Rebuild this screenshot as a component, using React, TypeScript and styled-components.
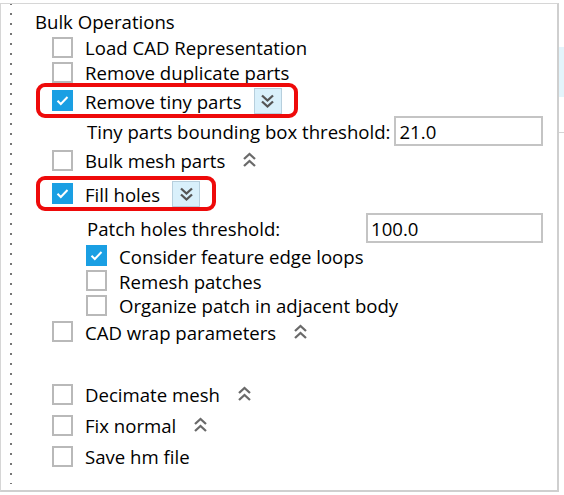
import React from "react";
import styled, { createGlobalStyle } from "styled-components";

const GlobalStyle = createGlobalStyle`
  html, body {
    margin: 0;
    padding: 0;
    background: #ffffff;
  }
  body {
    font-family: "Open Sans", "Noto Sans", "Liberation Sans", sans-serif;
    color: #000;
  }
`;

const Page = styled.div`
  display: flex;
  width: 564px;
  height: 495px;
  padding-top: 3px;
  box-sizing: border-box;
  overflow: hidden;
`;

const Panel = styled.div`
  display: flex;
  width: 559px;
  height: 489px;
  flex: none;
  box-sizing: border-box;
  border: 1px solid #d6d6d6;
  border-right: 2px solid #cfcfcf;
  border-bottom: 2px solid #cfcfcf;
`;

const Gutter = styled.div`
  width: 22px;
  flex: none;
  background-image: linear-gradient(#777777 2px, transparent 2px);
  background-size: 2px 10px;
  background-repeat: repeat-y;
  background-position: 9px 9px;
  margin-bottom: 6px;
`;

const Content = styled.div`
  flex: 1;
  display: flex;
  flex-direction: column;
  padding: 6px 14px 0 12px;
  font-size: 18.6px;
`;

const SideStrip = styled.div`
  flex: 1;
  display: flex;
  flex-direction: column;
`;

const SideCell = styled.div<{ $h: number; $bg?: string; $line?: boolean }>`
  height: ${(p) => p.$h}px;
  background: ${(p) => p.$bg || "transparent"};
  border-bottom: ${(p) => (p.$line ? "1px solid #d4d4d4" : "none")};
`;

const Title = styled.div`
  height: 25px;
  display: flex;
  align-items: center;
  line-height: 1;
`;

const Row = styled.div<{ $h: number; $indent: number }>`
  display: flex;
  align-items: center;
  height: ${(p) => p.$h}px;
  padding-left: ${(p) => p.$indent}px;
  white-space: nowrap;
`;

const Box = styled.span<{ $checked?: boolean }>`
  width: 21px;
  height: 21px;
  flex: none;
  box-sizing: border-box;
  display: flex;
  align-items: center;
  justify-content: center;
  border: 2px solid ${(p) => (p.$checked ? "#1a9fe3" : "#b9b9b9")};
  background: ${(p) => (p.$checked ? "#1a9fe3" : "#ffffff")};
  margin-right: 12px;
`;

const Label = styled.span`
  line-height: 1;
  padding-top: 3px;
`;

const Highlight = styled.div`
  display: inline-flex;
  align-items: center;
  height: 35px;
  box-sizing: border-box;
  border: 4px solid #ee0a0a;
  border-radius: 9px;
  margin-left: -16px;
  padding: 0 12px 0 12px;
`;

const ExpandButton = styled.span`
  width: 28px;
  height: 26px;
  box-sizing: border-box;
  display: flex;
  align-items: center;
  justify-content: center;
  margin-left: 12px;
  background: #d9f0fb;
  border: 1px solid #b7cfdd;
`;

const Collapse = styled.span`
  display: flex;
  align-items: center;
  margin-left: 17px;
`;

const FieldLabel = styled.span<{ $w?: number }>`
  line-height: 1;
  padding-top: 3px;
  width: ${(p) => (p.$w ? `${p.$w}px` : "auto")};
  flex: none;
  margin-right: 4px;
`;

const Input = styled.div`
  flex: 1;
  height: 30px;
  box-sizing: border-box;
  border: 2px solid #c4c4c4;
  display: flex;
  align-items: center;
  padding: 3px 0 0 3px;
  line-height: 1;
`;

const Spacer = styled.div`
  height: 33px;
`;

const Check = () => (
  <svg width="13" height="11" viewBox="0 0 13 11">
    <path d="M1.5 5.8 L4.8 9 L11.5 2" fill="none" stroke="#ffffff" strokeWidth="2" />
  </svg>
);

const ChevronsDown = () => (
  <svg width="15" height="16" viewBox="0 0 15 16">
    <path d="M2 2.5 L7.5 7.5 L13 2.5 M2 8.5 L7.5 13.5 L13 8.5" fill="none" stroke="#555555" strokeWidth="2.3" />
  </svg>
);

const ChevronsUp = () => (
  <svg width="15" height="16" viewBox="0 0 15 16">
    <path d="M2 7 L7.5 2 L13 7 M2 14 L7.5 9 L13 14" fill="none" stroke="#6a6a6a" strokeWidth="2.3" />
  </svg>
);

const Checkbox = ({ checked }: { checked?: boolean }) => (
  <Box $checked={checked}>{checked && <Check />}</Box>
);

export default function App() {
  return (
    <>
      <GlobalStyle />
      <Page>
        <Panel>
          <Gutter />
          <Content>
            <Title>Bulk Operations</Title>
            <Row $h={24} $indent={17}>
              <Checkbox />
              <Label>Load CAD Representation</Label>
            </Row>
            <Row $h={26} $indent={17}>
              <Checkbox />
              <Label>Remove duplicate parts</Label>
            </Row>
            <Row $h={31} $indent={17}>
              <Highlight>
                <Checkbox checked />
                <Label>Remove tiny parts</Label>
                <ExpandButton>
                  <ChevronsDown />
                </ExpandButton>
              </Highlight>
            </Row>
            <Row $h={30} $indent={52}>
              <FieldLabel>Tiny parts bounding box threshold:</FieldLabel>
              <Input>21.0</Input>
            </Row>
            <Row $h={28} $indent={17}>
              <Checkbox />
              <Label>Bulk mesh parts</Label>
              <Collapse>
                <ChevronsUp />
              </Collapse>
            </Row>
            <Row $h={39} $indent={17}>
              <Highlight>
                <Checkbox checked />
                <Label>Fill holes</Label>
                <ExpandButton>
                  <ChevronsDown />
                </ExpandButton>
              </Highlight>
            </Row>
            <Row $h={30} $indent={52}>
              <FieldLabel $w={275}>Patch holes threshold:</FieldLabel>
              <Input>100.0</Input>
            </Row>
            <Row $h={25} $indent={51}>
              <Checkbox checked />
              <Label>Consider feature edge loops</Label>
            </Row>
            <Row $h={25} $indent={51}>
              <Checkbox />
              <Label>Remesh patches</Label>
            </Row>
            <Row $h={24} $indent={51}>
              <Checkbox />
              <Label>Organize patch in adjacent body</Label>
            </Row>
            <Row $h={29} $indent={17}>
              <Checkbox />
              <Label>CAD wrap parameters</Label>
              <Collapse>
                <ChevronsUp />
              </Collapse>
            </Row>
            <Spacer />
            <Row $h={30} $indent={17}>
              <Checkbox />
              <Label>Decimate mesh</Label>
              <Collapse>
                <ChevronsUp />
              </Collapse>
            </Row>
            <Row $h={32} $indent={17}>
              <Checkbox />
              <Label>Fix normal</Label>
              <Collapse>
                <ChevronsUp />
              </Collapse>
            </Row>
            <Row $h={30} $indent={17}>
              <Checkbox />
              <Label>Save hm file</Label>
            </Row>
          </Content>
        </Panel>
        <SideStrip>
          <SideCell $h={44} />
          <SideCell $h={50} $bg="#e3f4fb" />
          <SideCell $h={35} $line />
        </SideStrip>
      </Page>
    </>
  );
}
